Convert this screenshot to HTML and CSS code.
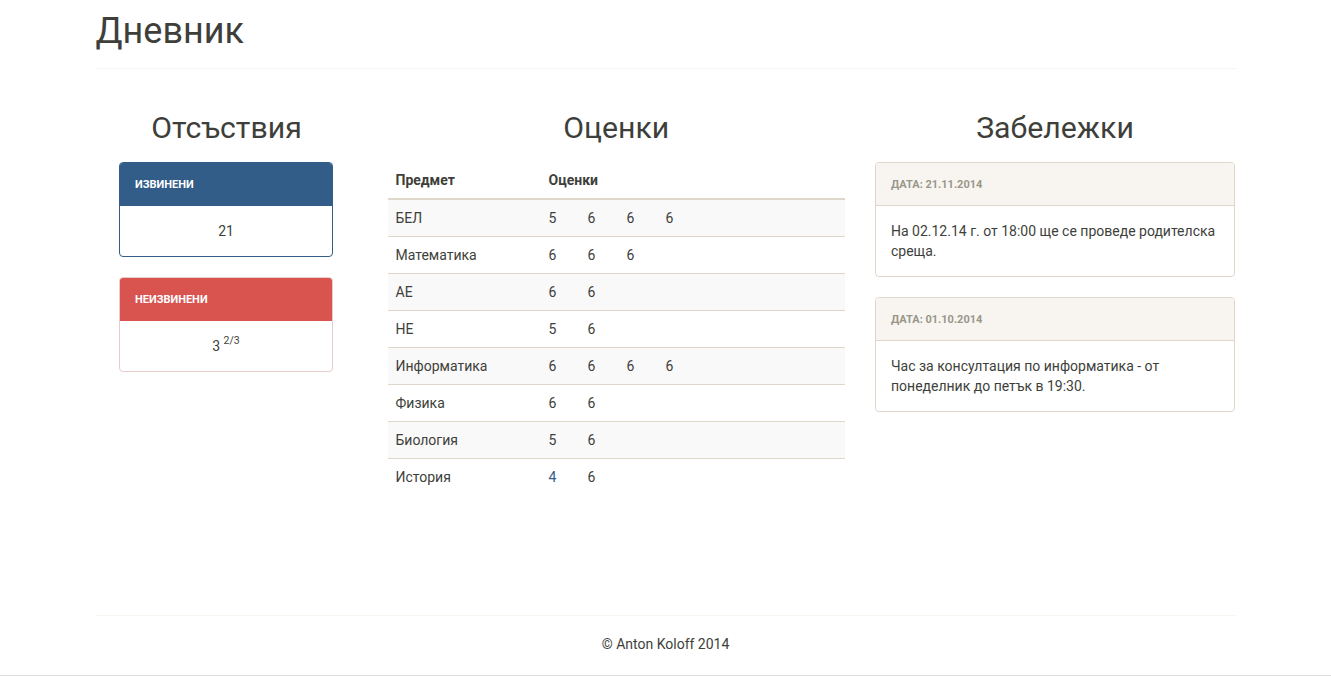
FILE: index.html
```html
<!DOCTYPE html>
<html lang="bg">
<head>
<meta charset="utf-8">
<title>Дневник</title>
<link rel="stylesheet" href="styles.css">
</head>
<body>
<div class="container">
  <header class="page-header">
    <h1>Дневник</h1>
  </header>
  <main class="row">
    <section class="col col-left">
      <h2>Отсъствия</h2>
      <div class="panel panel-primary">
        <div class="panel-heading">Извинени</div>
        <div class="panel-body center">21</div>
      </div>
      <div class="panel panel-danger">
        <div class="panel-heading">Неизвинени</div>
        <div class="panel-body center">3 <sup>2/3</sup></div>
      </div>
    </section>
    <section class="col col-mid">
      <h2>Оценки</h2>
      <table class="table">
        <thead>
          <tr><th class="subj">Предмет</th><th>Оценки</th></tr>
        </thead>
        <tbody>
          <tr><td>БЕЛ</td><td><span class="g">5</span><span class="g">6</span><span class="g">6</span><span class="g">6</span></td></tr>
          <tr><td>Математика</td><td><span class="g">6</span><span class="g">6</span><span class="g">6</span></td></tr>
          <tr><td>АЕ</td><td><span class="g">6</span><span class="g">6</span></td></tr>
          <tr><td>НЕ</td><td><span class="g">5</span><span class="g">6</span></td></tr>
          <tr><td>Информатика</td><td><span class="g">6</span><span class="g">6</span><span class="g">6</span><span class="g">6</span></td></tr>
          <tr><td>Физика</td><td><span class="g">6</span><span class="g">6</span></td></tr>
          <tr><td>Биология</td><td><span class="g">5</span><span class="g">6</span></td></tr>
          <tr><td>История</td><td><span class="g g-low">4</span><span class="g">6</span></td></tr>
        </tbody>
      </table>
    </section>
    <section class="col col-right">
      <h2>Забележки</h2>
      <div class="panel panel-default">
        <div class="panel-heading">Дата: 21.11.2014</div>
        <div class="panel-body">На 02.12.14 г. от 18:00 ще се проведе родителска среща.</div>
      </div>
      <div class="panel panel-default">
        <div class="panel-heading">Дата: 01.10.2014</div>
        <div class="panel-body">Час за консултация по информатика - от понеделник до петък в 19:30.</div>
      </div>
    </section>
  </main>
  <footer class="footer">© Anton Koloff 2014</footer>
</div>
<div class="bottom-line"></div>
</body>
</html>
```

FILE: styles.css
```css
* { box-sizing: border-box; }

html, body {
  margin: 0;
  padding: 0;
  background: #ffffff;
}

body {
  font-family: Roboto, "Liberation Sans", sans-serif;
  font-size: 14px;
  line-height: 20px;
  color: #3e3f3a;
}

.container {
  width: 1140px;
  margin: 0 auto;
}

.page-header {
  padding: 11px 0 17px;
  border-bottom: 1px solid #f8f5f0;
}

.page-header h1 {
  margin: 0;
  font-size: 36px;
  line-height: 40px;
  font-weight: 400;
}

.row {
  display: flex;
  align-items: flex-start;
  gap: 30px;
  padding-top: 42px;
}

.col-left { width: 262px; }
.col-mid { width: 457.5px; }
.col-right { width: 360px; }

h2 {
  margin: 0 0 18px;
  font-size: 30.25px;
  line-height: 33px;
  font-weight: 400;
  text-align: center;
}

.panel {
  border: 1px solid #dfd7ca;
  border-radius: 4px;
  margin-bottom: 20px;
  background: #fff;
}

.col-left .panel {
  width: 214px;
  margin-left: 23.5px;
}

.panel-heading {
  padding: 11px 15px 9px;
  line-height: 22px;
  font-size: 11px;
  font-weight: 700;
  text-transform: uppercase;
  border-bottom: 1px solid transparent;
  border-radius: 3px 3px 0 0;
}

.panel-body {
  padding: 15px;
}

.center { text-align: center; }

.panel-body sup {
  font-size: 10.5px;
  line-height: 0;
  position: relative;
  top: -1px;
  vertical-align: super;
}

.panel-primary { border-color: #325d88; }
.panel-primary .panel-heading {
  background: #325d88;
  border-color: #325d88;
  color: #ffffff;
}

.panel-danger { border-color: #ebcccc; }
.panel-danger .panel-heading {
  background: #d9534f;
  border-color: #d9534f;
  color: #ffffff;
}

.panel-default .panel-heading {
  background: #f8f5f0;
  border-color: #dfd7ca;
  color: #98978b;
}

.table {
  width: 100%;
  border-collapse: collapse;
  border-spacing: 0;
}

.table th {
  text-align: left;
  font-weight: 700;
  padding: 8px;
  vertical-align: bottom;
  border-bottom: 2px solid #dfd7ca;
}

.table th.subj { width: 153px; }

.table td {
  padding: 8px;
  border-top: 1px solid #dfd7ca;
  vertical-align: top;
}

.table tbody tr:first-child td { border-top: 0; }

.table tbody tr:nth-child(odd) td { background: #f9f9f9; }

.g {
  display: inline-block;
  width: 39px;
}

.g-low { color: #325d88; }

.footer {
  margin-top: 120px;
  border-top: 1px solid #f8f5f0;
  padding: 18px 0 21px;
  text-align: center;
}

.bottom-line {
  border-top: 1px solid #dddddd;
  height: 20px;
}
```
